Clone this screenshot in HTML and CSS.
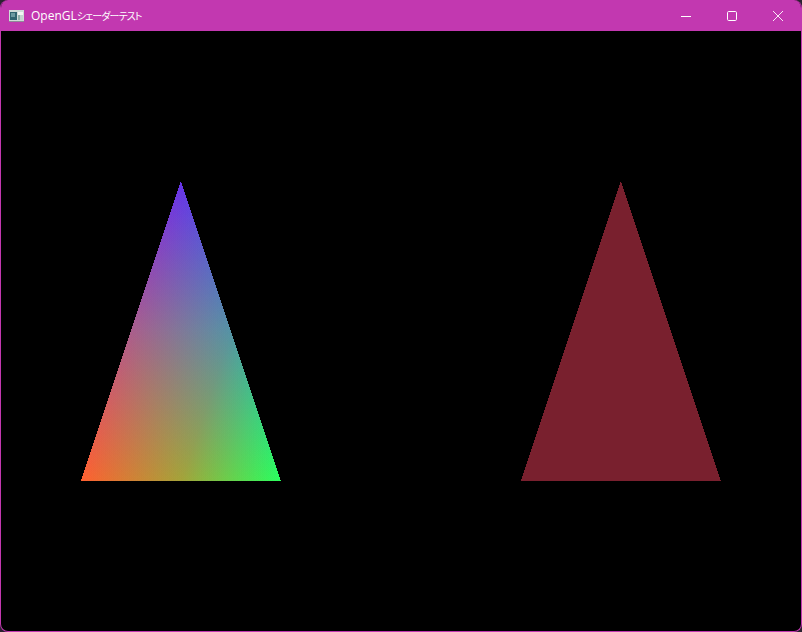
FILE: index.html
```html
<!DOCTYPE html>
<html lang="ja">
<head>
    <meta charset="UTF-8">
    <title>OpenGLシェーダーテスト</title>
    <link rel="stylesheet" href="styles.css">
</head>
<body>
    <div class="window">
        <div class="titlebar">
            <svg class="app-icon" width="15" height="12" viewBox="0 0 15 12">
                <rect x="0" y="0" width="15" height="12" fill="#cfdcd8"/>
                <rect x="1" y="2" width="7" height="8" fill="#2f6570"/>
                <rect x="2" y="3" width="4" height="4" fill="#6a9aa0"/>
                <rect x="9" y="2" width="5" height="3" fill="#f2f6f4"/>
                <rect x="9" y="5" width="2" height="5" fill="#8fb0aa"/>
                <rect x="11" y="5" width="3" height="5" fill="#c4d4d0"/>
                <rect x="0" y="11" width="15" height="1" fill="#8f8a98"/>
            </svg>
            <span class="title">OpenGL<span class="title-ja">シェーダーテスト</span></span>
            <div class="controls">
                <div class="control">
                    <svg width="10" height="10" viewBox="0 0 10 10"><path d="M0 5.5H10" stroke="#fff" fill="none"/></svg>
                </div>
                <div class="control">
                    <svg width="10" height="10" viewBox="0 0 10 10"><rect x="0.5" y="0.5" width="9" height="9" rx="1.2" stroke="#fff" fill="none"/></svg>
                </div>
                <div class="control">
                    <svg width="10" height="10" viewBox="0 0 10 10"><path d="M0 0L10 10M10 0L0 10" stroke="#fff" stroke-width="0.9" fill="none"/></svg>
                </div>
            </div>
        </div>
        <svg class="viewport" viewBox="1 31 800 600" shape-rendering="crispEdges">
            <defs>
                <!-- one gradient per vertex, added together = interpolated vertex colours -->
                <linearGradient id="vertTop" gradientUnits="userSpaceOnUse" x1="181" y1="181" x2="181" y2="481">
                    <stop offset="0" stop-color="#6633ea"/>
                    <stop offset="0.5" stop-color="#2d277c"/>
                    <stop offset="1" stop-color="#000"/>
                </linearGradient>
                <linearGradient id="vertLeft" gradientUnits="userSpaceOnUse" x1="81" y1="481" x2="261" y2="421">
                    <stop offset="0" stop-color="#ff6030"/>
                    <stop offset="0.5" stop-color="#7d3710"/>
                    <stop offset="1" stop-color="#000"/>
                </linearGradient>
                <linearGradient id="vertRight" gradientUnits="userSpaceOnUse" x1="281" y1="481" x2="101" y2="421">
                    <stop offset="0" stop-color="#2aff5e"/>
                    <stop offset="0.5" stop-color="#286c29"/>
                    <stop offset="1" stop-color="#000"/>
                </linearGradient>
            </defs>
            <g class="additive">
                <polygon points="181,181 281,481 81,481" fill="url(#vertTop)"/>
                <polygon class="add" points="181,181 281,481 81,481" fill="url(#vertLeft)"/>
                <polygon class="add" points="181,181 281,481 81,481" fill="url(#vertRight)"/>
            </g>
            <polygon points="621,181 721,481 521,481" fill="#79202e"/>
        </svg>
    </div>
</body>
</html>
```

FILE: styles.css
```css
* {
    box-sizing: border-box;
}

html, body {
    margin: 0;
    height: 100%;
    background-color: #2b2230;
}

body {
    font-family: "Open Sans", "Noto Sans CJK JP", sans-serif;
}

.window {
    display: flex;
    flex-direction: column;
    width: 802px;
    height: 632px;
    border: 1px solid #c238b0;
    border-top: none;
    border-radius: 8px;
    overflow: hidden;
    background: #000;
}

.titlebar {
    display: flex;
    align-items: center;
    flex: none;
    height: 31px;
    margin: 0 -1px;
    padding-left: 9px;
    background-color: #c238b0;
    color: #fff;
}

.app-icon {
    flex: none;
}

.title {
    margin-left: 7px;
    font-size: 12px;
    white-space: nowrap;
}

/* the system font sets kana much narrower than Noto does */
.title-ja {
    font-size: 10px;
    font-feature-settings: "palt";
    letter-spacing: -0.9px;
}

.controls {
    display: flex;
    margin-left: auto;
    margin-right: 1px;
    height: 100%;
}

.control {
    display: flex;
    align-items: center;
    justify-content: center;
    width: 46px;
    height: 100%;
}

.viewport {
    display: block;
    flex: none;
    width: 800px;
    height: 600px;
}

.additive {
    isolation: isolate;
}

.add {
    mix-blend-mode: plus-lighter;
}
```
